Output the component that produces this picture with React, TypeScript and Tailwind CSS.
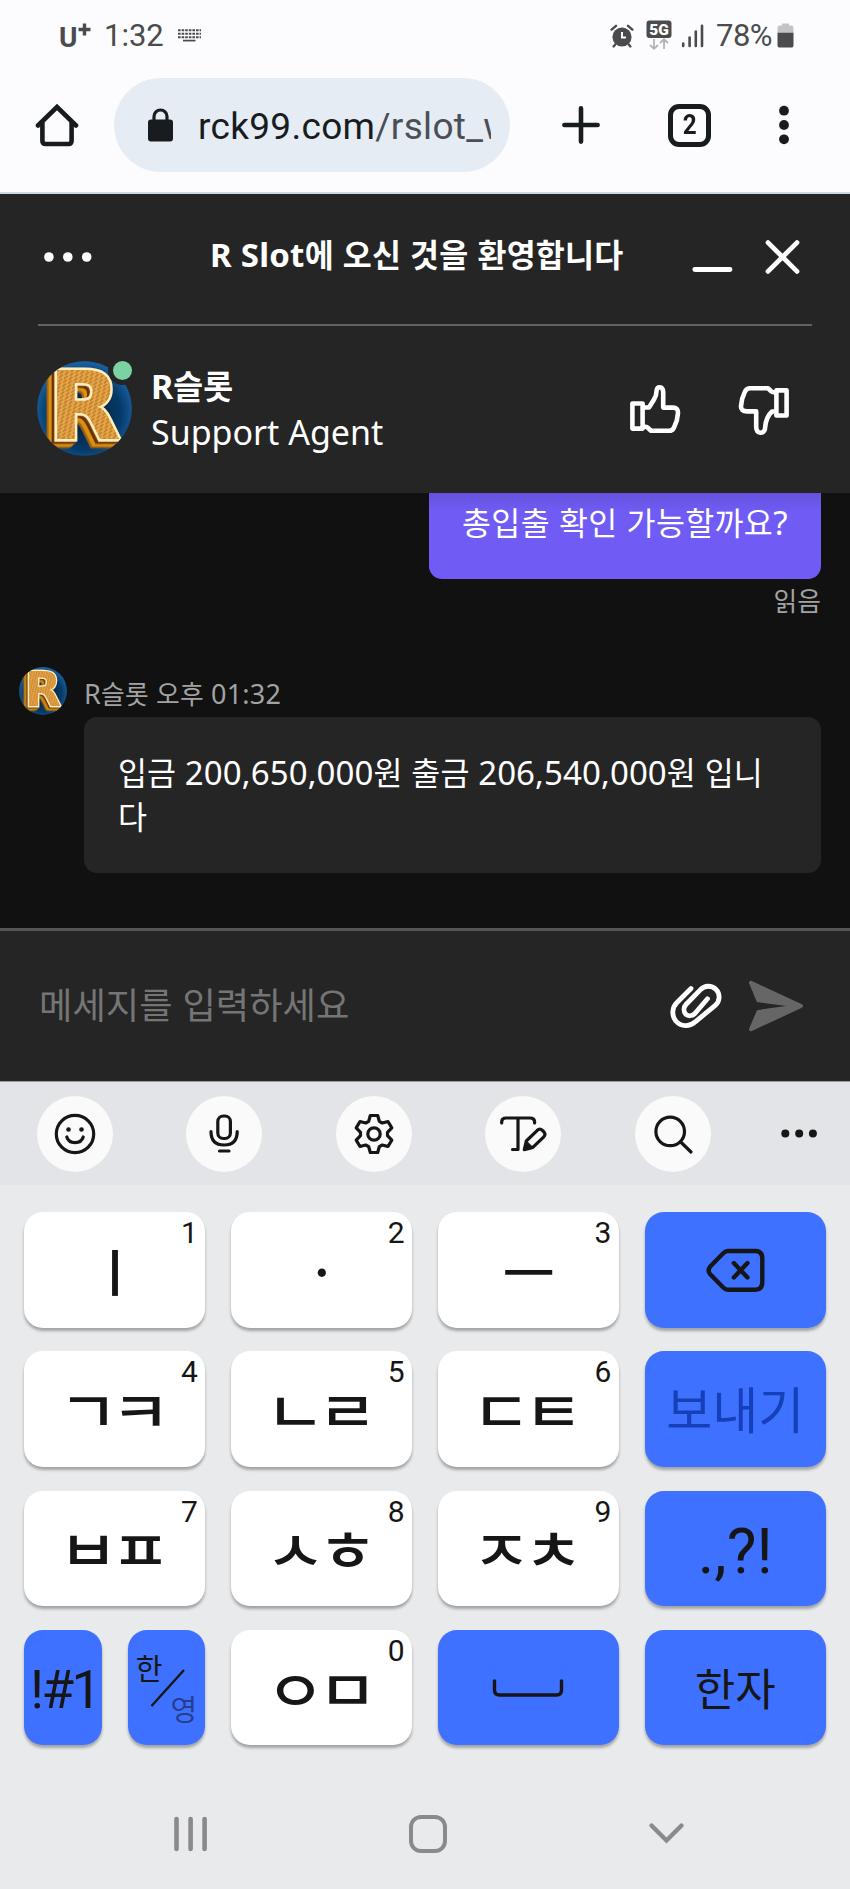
import type { ReactNode } from 'react';

const HANGUL = /([\u3131-\u318e\uac00-\ud7a3]+)/;

// Hangul runs are set a little smaller than the latin text around them
function Mixed({ text }: { text: string }) {
  return (
    <>
      {text.split(HANGUL).map((part, i) =>
        HANGUL.test(part) ? (
          <span key={i} className="font-['Noto_Sans_CJK_KR',sans-serif] text-[0.955em] leading-none">{part}</span>
        ) : (
          <span key={i}>{part}</span>
        )
      )}
    </>
  );
}

function Avatar({ id, size }: { id: string; size: number }) {
  return (
    <svg width={size} height={size} viewBox="0 0 95 95" className="shrink-0">
      <defs>
        <clipPath id={`${id}-clip`}><circle cx="47.5" cy="47.5" r="47.3" /></clipPath>
        <radialGradient id={`${id}-bg`} cx="0.5" cy="0.55" r="0.55">
          <stop offset="0" stopColor="#04182f" />
          <stop offset="0.7" stopColor="#053a68" />
          <stop offset="1" stopColor="#1b63a5" />
        </radialGradient>
        <pattern id={`${id}-grain`} width="5" height="4" patternUnits="userSpaceOnUse" patternTransform="rotate(12)">
          <rect width="5" height="4" fill="#e6a546" />
          <path d="M0 4 L3 0" stroke="#b5752a" strokeWidth="1.3" />
        </pattern>
        {/* bevel: dark rim and a gold edge that runs down to the left */}
        <filter id={`${id}-bevel`} x="-20%" y="-20%" width="140%" height="140%">
          <feDropShadow dx="-1" dy="1" stdDeviation="0" floodColor="#8a4a0c" />
          <feDropShadow dx="-2" dy="1.5" stdDeviation="0" floodColor="#6b2d06" />
          <feDropShadow dx="-3" dy="2.5" stdDeviation="0.4" floodColor="#d99018" />
          <feDropShadow dx="-2" dy="1.5" stdDeviation="0.4" floodColor="#a8620e" />
        </filter>
      </defs>
      <g clipPath={`url(#${id}-clip)`}>
        <rect width="95" height="95" fill={`url(#${id}-bg)`} />
        <text
          x="11.5"
          y="78"
          fontFamily="DejaVu Sans, sans-serif"
          fontWeight="700"
          fontSize="94"
          fill={`url(#${id}-grain)`}
          stroke="#ffeebb"
          strokeWidth="5"
          paintOrder="stroke"
          filter={`url(#${id}-bevel)`}
        >
          R
        </text>
      </g>
    </svg>
  );
}

function StatusBar() {
  return (
    <div className="flex h-[71px] items-center pl-[59px] pr-[56px] text-[#4b4b4d]">
      <span className="w-[19px] font-['Roboto',sans-serif] text-[28px] font-bold leading-[71px] pt-[3px]">U</span>
      <svg width="13" height="13" viewBox="0 0 13 13" className="-mt-[13px]">
        <path d="M6.5 0.5V12.5M0.5 6.5H12.5" stroke="currentColor" strokeWidth="3.4" />
      </svg>
      <span className="ml-[13px] w-[60px] pt-[2px] font-['Roboto',sans-serif] text-[31px]">1:32</span>
      <svg width="23" height="13" viewBox="0 0 23 13" className="ml-[14px]" stroke="currentColor">
        <path d="M0 1.2H23M0 4.7H23M0 8.2H23" strokeWidth="2" strokeDasharray="2.6 1" />
        <path d="M5 11.6H17.5" strokeWidth="1.7" />
      </svg>

      <svg width="24" height="24" viewBox="0 0 24 24" className="ml-auto" fill="none" stroke="currentColor" strokeLinecap="round">
        <circle cx="12" cy="13" r="9.6" fill="currentColor" stroke="none" />
        <path d="M1.6 5.6L6 1.8M22.4 5.6L18 1.8M5.2 20.5L3.6 22.4M18.8 20.5L20.4 22.4" strokeWidth="2.4" />
        <path d="M12 8V13.6H16" stroke="#fcfcfe" strokeWidth="2" strokeLinecap="butt" />
      </svg>
      <svg width="26" height="30" viewBox="0 0 26 30" className="-mt-[2px] ml-[12px]" fill="none">
        <rect x="0.5" y="0.5" width="25" height="17.5" rx="3" fill="currentColor" />
        <text x="13" y="14.6" textAnchor="middle" fontFamily="Roboto, sans-serif" fontWeight="900" fontSize="15.5" fill="#fff">5G</text>
        <path d="M8 19V28.5M4 25L8 28.8L12 25M18 29V19.5M14 23L18 19.2L22 23" stroke="#b4b4b6" strokeWidth="1.8" />
      </svg>
      <svg width="23" height="24" viewBox="0 0 23 24" className="ml-[9px]" stroke="currentColor" strokeWidth="2.6" strokeLinecap="round">
        <path d="M2.2 19.5V22M8.6 13.5V22M14.8 7.5V22M21 1.8V22" />
      </svg>
      <span className="ml-[12px] w-[58px] pt-[2px] font-['Roboto',sans-serif] text-[31px] tracking-[-0.5px]">78%</span>
      <svg width="17" height="25" viewBox="0 0 17 25" className="ml-[3px]">
        <path d="M5 0.5H12V2.5H14.5Q16.5 2.5 16.5 5V10H0.5V5Q0.5 2.5 2.5 2.5H5Z" fill="#c3c3c5" />
        <path d="M0.5 9.7H16.5V22Q16.5 24.6 14 24.6H3Q0.5 24.6 0.5 22Z" fill="currentColor" />
      </svg>
    </div>
  );
}

function BrowserBar() {
  return (
    <div className="mt-[7px] flex h-[94px] items-center pl-[34.5px] text-[#191c1f]">
      <svg width="44" height="44" viewBox="0 0 44 44" fill="none" stroke="currentColor" strokeWidth="4.6" strokeLinecap="round" strokeLinejoin="round">
        <path d="M3 22.5L22 4L41 22.5" strokeLinejoin="miter" />
        <path d="M7.4 20V37.5Q7.4 41 10.5 41H33.5Q36.6 41 36.6 37.5V20" />
      </svg>
      <div className="ml-[35.5px] flex h-[94px] w-[396px] items-center rounded-full bg-[#e5ecf3] pl-[33px]">
        <svg width="27" height="34" viewBox="0 0 27 34">
          <rect x="1" y="11.5" width="25" height="22" rx="3" fill="currentColor" />
          <path d="M7 13V8.5a6.5 6.5 0 0 1 13 0V13" fill="none" stroke="currentColor" strokeWidth="3.2" />
        </svg>
        <span className="ml-[24px] w-[293px] overflow-hidden whitespace-nowrap pt-[3px] font-['Roboto',sans-serif] text-[37px] tracking-[0.3px]">
          rck99.com<span className="text-[#4a4f57]">/rslot_w</span>
        </span>
      </div>
      <svg width="38" height="38" viewBox="0 0 38 38" className="ml-[52px]" stroke="currentColor" strokeWidth="4.6" strokeLinecap="round">
        <path d="M19 2.4V35.6M2.4 19H35.6" />
      </svg>
      <div className="ml-[68px] flex size-[43px] items-center justify-center rounded-[11px] border-[5px] border-[#191c1f] font-['Roboto',sans-serif] text-[27px] font-bold">
        <span className="scale-x-90 pt-px">2</span>
      </div>
      <svg width="10" height="40" viewBox="0 0 10 40" className="ml-[68px]" fill="currentColor">
        <circle cx="5" cy="5.7" r="4.9" />
        <circle cx="5" cy="20" r="4.9" />
        <circle cx="5" cy="34.3" r="4.9" />
      </svg>
    </div>
  );
}

function ChatHeader() {
  return (
    <header className="h-[299px] bg-[#252525] text-white">
      <div className="flex h-[129px] items-center pl-[44px] pr-[50px]">
        <svg width="48" height="10" viewBox="0 0 48 10" className="-mt-[3px]" fill="currentColor">
          <circle cx="4.9" cy="5" r="4.8" />
          <circle cx="23.8" cy="5" r="4.8" />
          <circle cx="42.7" cy="5" r="4.8" />
        </svg>
        <h1 className="-mt-[8px] ml-[118px] whitespace-nowrap text-[33px] font-bold leading-[46px] tracking-[0.25px]">
          <Mixed text="R Slot에 오신 것을 환영합니다" />
        </h1>
        <svg width="41" height="34" viewBox="0 0 41 34" className="-mt-px ml-auto" stroke="currentColor" strokeWidth="4.8" strokeLinecap="round">
          <path d="M2.8 28.5H38" />
        </svg>
        <svg width="35" height="34" viewBox="0 0 35 34" className="-mt-[3px] ml-[32px]" stroke="currentColor" strokeWidth="4.8" strokeLinecap="round">
          <path d="M3 2.6L32 31.4M32 2.6L3 31.4" />
        </svg>
      </div>
      <div className="mx-[38px] mt-[0.5px] h-[2.5px] bg-[#626262]" />
      <div className="flex h-[167px] items-center pl-[37px]">
        <div className="relative -mt-[2px] size-[95px]">
          <Avatar id="agent" size={95} />
          <span className="absolute -right-[5px] -top-[5px] size-[29px] rounded-full border-[5px] border-[#252525] bg-[#7ad3a1]" />
        </div>
        <div className="-mt-[2px] ml-[19px] w-[300px] text-[34px] leading-[46px]">
          <p className="font-bold"><Mixed text="R슬롯" /></p>
          <p>Support Agent</p>
        </div>
        <svg width="52" height="50" viewBox="0 0 52 50" className="-mt-[2px] ml-[178px]" fill="none" stroke="currentColor" strokeWidth="4.6" strokeLinejoin="round">
          <path d="M3.4 19.5H13.6V44.6H3.4Z" />
          <path d="M13.6 23.5H20L25 15.5Q27.5 11.5 27.6 6.5Q28 3.3 30.7 3.3Q34 3.6 34.2 8V23.6H44Q49.3 23.6 49 29Q48.6 36.5 45 43.5Q43.6 46.8 40 46.8H22L18.8 43.8Q18 42.7 16.5 42.7H13.6" />
        </svg>
        <svg width="52" height="50" viewBox="0 0 52 50" className="ml-[57px] rotate-180" fill="none" stroke="currentColor" strokeWidth="4.6" strokeLinejoin="round">
          <path d="M3.4 19.5H13.6V44.6H3.4Z" />
          <path d="M13.6 23.5H18Q24 18 24.8 8Q25 2.3 29.5 2.3Q33.7 2.6 33.8 8V23.6H43Q49.3 23.6 49 29Q48.6 36.5 45 43.5Q43.6 46.8 40 46.8H22L18.8 43.8Q18 42.7 16.5 42.7H13.6" />
        </svg>
      </div>
    </header>
  );
}

function Messages() {
  return (
    <main className="h-[435px] overflow-hidden bg-[#111111]">
      <div className="flex flex-col items-end pr-[29px]">
        <div className="h-[85.5px] w-[392px] rounded-b-[13px] bg-[#705bf4] bg-[linear-gradient(#0000001a,transparent_18px)] pl-[33px] pt-[8px] text-[33px] leading-[44px] tracking-[0.35px] text-white">
          <Mixed text="총입출 확인 가능할까요?" />
        </div>
        <span className="mt-[4px] text-[27px] leading-[36px] text-[#a3a3a3]"><Mixed text="읽음" /></span>
      </div>
      <div className="mt-[48px] flex pl-[18.5px]">
        <Avatar id="sender" size={48} />
        <div className="ml-[17.5px] w-[737px]">
          <p className="pt-[9px] text-[27px] leading-[36px] tracking-[0.2px] text-[#a3a3a3]"><Mixed text="R슬롯 오후 01:32" /></p>
          <div className="mt-[5.5px] h-[155.5px] rounded-[13px] bg-[#252525] pl-[34px] pt-[34px] text-[33px] leading-[44px] tracking-[0.1px] text-white">
            <Mixed text="입금 200,650,000원 출금 206,540,000원 입니" />
            <br />
            <Mixed text="다" />
          </div>
        </div>
      </div>
    </main>
  );
}

function Composer() {
  return (
    <div className="flex h-[153px] items-center border-t-[3px] border-[#565656] bg-[#252525] pl-[39px] pr-[46px]">
      <span className="-mt-[4px] text-[38px] leading-[50px] text-[#757575]"><Mixed text="메세지를 입력하세요" /></span>
      <svg width="52" height="46" viewBox="0 0 52 46" className="ml-auto" fill="none" stroke="#fff" strokeWidth="4.8" strokeLinecap="round">
        <path d="M21 5.5L7 19.5a13.8 13.8 0 0 0 -1.2 18.5a13.5 13.5 0 0 0 19.5 0.8L45.3 22.3a10.8 10.8 0 0 0 0.5 -16a10.6 10.6 0 0 0 -15.3 0.4L16 21.5a7.4 7.4 0 0 0 -0.4 9.6a6.6 6.6 0 0 0 9 -0.3L37.5 15.8" />
      </svg>
      <svg width="56" height="52" viewBox="0 0 56 52" className="ml-[26px]">
        <path d="M3 2.8L53 26L3 49.2L10.4 32L37 26L10.4 20.6Z" fill="#666" stroke="#666" strokeWidth="4" strokeLinejoin="round" />
        <path d="M10 22.2L38 26L10 29.8Z" fill="#252525" />
      </svg>
    </div>
  );
}

function ToolButton({ children }: { children: ReactNode }) {
  return (
    <button className="flex size-[76px] items-center justify-center rounded-full bg-[#fafafa]">
      <svg width="48" height="48" viewBox="0 0 48 48" fill="none" stroke="currentColor" strokeWidth="3.2" strokeLinecap="round" strokeLinejoin="round">
        {children}
      </svg>
    </button>
  );
}

function Toolbar() {
  return (
    <div className="flex h-[104px] items-center gap-[73.5px] border-t border-[#9b9b9d] bg-[#e3e4e8] pl-[36.5px] text-[#161616]">
      <ToolButton>
        <circle cx="24" cy="24" r="18.7" />
        <path d="M15.8 27Q17.5 32.6 24 32.6Q30.5 32.6 32.2 27" />
        <circle cx="17.5" cy="19.5" r="2.3" fill="currentColor" stroke="none" />
        <circle cx="30.5" cy="19.5" r="2.3" fill="currentColor" stroke="none" />
      </ToolButton>
      <ToolButton>
        <rect x="17.8" y="6" width="12.6" height="22.5" rx="5.6" />
        <path d="M11 21.5Q11 35 24.1 35Q37.2 35 37.2 21.5M19.5 41H29" />
      </ToolButton>
      <ToolButton>
        <path d="M20.3 5.5H27.7L29.3 11.3L32.3 13L38 11.5L41.8 17.8L37.5 22.3V25.7L41.8 30.2L38 36.5L32.3 35L29.3 36.7L27.7 42.5H20.3L18.7 36.7L15.7 35L10 36.5L6.2 30.2L10.5 25.7V22.3L6.2 17.8L10 11.5L15.7 13L18.7 11.3Z" />
        <circle cx="24" cy="24" r="6.2" />
      </ToolButton>
      <ToolButton>
        <path d="M2.7 13V11.5Q3 8 7 8H31Q35.3 8 35.6 11.5V13M19 8.5V39.5H13.5" />
        <path d="M25.3 39.6L27.3 31L38.3 20.3Q40.8 18 43.3 20.3L45 22Q47 24.4 44.8 26.8L33.8 37.4Z" />
        <path d="M27.5 31L33.5 37L25.3 39.6Z" fill="currentColor" strokeWidth="1" />
      </ToolButton>
      <ToolButton>
        <circle cx="21.2" cy="21.4" r="14.3" />
        <path d="M31.7 32L42 42" />
      </ToolButton>
      <svg width="36" height="9" viewBox="0 0 36 9" className="-ml-[3px]" fill="currentColor">
        <circle cx="4.3" cy="4.5" r="4" />
        <circle cx="18.2" cy="4.5" r="4" />
        <circle cx="31.9" cy="4.5" r="4" />
      </svg>
    </div>
  );
}

function Key({ hint, blue, children }: { hint?: string; blue?: boolean; children: ReactNode }) {
  return (
    <button
      className={`relative flex h-[115.6px] items-center justify-center rounded-[19px] text-[#161616] shadow-[0_3px_3px_rgba(0,0,0,0.3)] ${
        blue ? 'bg-[#3e71ff]' : 'bg-white'
      }`}
    >
      {children}
      {hint && <span className="absolute right-[7.5px] top-[6px] font-['Roboto',sans-serif] text-[30px] leading-[30px]">{hint}</span>}
    </button>
  );
}

function Jamo({ className = '-mt-[2px] pr-[7px] tracking-[-6px] scale-x-[1.15]', children }: { className?: string; children: string }) {
  return (
    <span className={`whitespace-nowrap font-['Noto_Sans_CJK_KR',sans-serif] text-[56px] font-medium leading-none ${className}`}>
      {children}
    </span>
  );
}

function Keyboard() {
  return (
    <div className="grid grid-cols-4 gap-x-[25.8px] gap-y-[23.7px] px-[24.3px] pt-[27px]">
      <Key hint="1"><Jamo className="scale-y-[0.91]">ㅣ</Jamo></Key>
      <Key hint="2"><Jamo className="-mt-[2px]">ㆍ</Jamo></Key>
      <Key hint="3"><Jamo className="scale-x-[1.02]">ㅡ</Jamo></Key>
      <Key blue>
        <svg width="60" height="46" viewBox="0 0 60 46" className="ml-[2px] mt-[3px]" fill="none" stroke="currentColor" strokeWidth="4.4" strokeLinecap="round" strokeLinejoin="round">
          <path d="M22 3H49Q56.3 3 56.3 10.5V34Q56.3 41.7 49 41.7H22Q19.5 41.7 17.5 39.7L4 26Q1.2 22.4 4 18.8L17.5 5Q19.5 3 22 3Z" />
          <path d="M27.8 15L41.5 29.5M41.5 15L27.8 29.5" strokeWidth="4.4" />
        </svg>
      </Key>

      <Key hint="4"><Jamo>ㄱㅋ</Jamo></Key>
      <Key hint="5"><Jamo>ㄴㄹ</Jamo></Key>
      <Key hint="6"><Jamo>ㄷㅌ</Jamo></Key>
      <Key blue>
        <span className="-mt-[4px] whitespace-nowrap font-['Noto_Sans_CJK_KR',sans-serif] text-[50px] leading-none text-[#1640b8]">보내기</span>
      </Key>

      <Key hint="7"><Jamo>ㅂㅍ</Jamo></Key>
      <Key hint="8"><Jamo>ㅅㅎ</Jamo></Key>
      <Key hint="9"><Jamo>ㅈㅊ</Jamo></Key>
      <Key blue>
        <span className="mt-[7px] font-['Roboto',sans-serif] text-[63px] leading-none">.,?!</span>
      </Key>

      <div className="grid grid-cols-2 gap-x-[25.8px]">
        <Key blue>
          <span className="ml-[3px] mt-[5px] font-['Roboto',sans-serif] text-[53px] leading-none tracking-[-2.5px]">!#1</span>
        </Key>
        <Key blue>
          <div className="flex size-full flex-col justify-center font-['Noto_Sans_CJK_KR',sans-serif] text-[29px] leading-none">
            <span className="pl-[8px] text-left">한</span>
            <svg width="36" height="38" viewBox="0 0 36 38" className="-my-[13px] ml-[22px]" stroke="currentColor" strokeWidth="2.4">
              <path d="M1.5 37L34 1" />
            </svg>
            <span className="pr-[8px] text-right text-[#263f8c]">영</span>
          </div>
        </Key>
      </div>
      <Key hint="0"><Jamo>ㅇㅁ</Jamo></Key>
      <Key blue>
        <svg width="72" height="20" viewBox="0 0 72 20" fill="none" stroke="currentColor" strokeWidth="3.4" strokeLinecap="round">
          <path d="M2.5 3V12Q2.5 17 7.5 17H64.5Q69.5 17 69.5 12V3" />
        </svg>
      </Key>
      <Key blue>
        <span className="-mt-[2px] whitespace-nowrap font-['Noto_Sans_CJK_KR',sans-serif] text-[44px] leading-none">한자</span>
      </Key>
    </div>
  );
}

function NavBar() {
  return (
    <div className="mt-[69.5px] flex items-center pl-[173px]">
      <svg width="35" height="38" viewBox="0 0 35 38" stroke="#8a8a8c" strokeWidth="4.6" strokeLinecap="round">
        <path d="M3.5 4V34M17.6 4V34M31.6 4V34" />
      </svg>
      <div className="ml-[201px] size-[38px] rounded-[12px] border-[4.6px] border-[#8a8a8c]" />
      <svg width="37" height="24" viewBox="0 0 37 24" className="ml-[201px]" fill="none" stroke="#8a8a8c" strokeWidth="4.4" strokeLinecap="round">
        <path d="M3.5 3.5L18.5 18.5L33.5 3.5" />
      </svg>
    </div>
  );
}

export default function App() {
  return (
    <div className="h-[1889px] w-[850px] overflow-hidden bg-[#e9eaec] font-['Noto_Sans','Noto_Sans_CJK_KR',sans-serif]">
      <div className="h-[194px] border-b-2 border-[#ced8df] bg-[#fcfcfe]">
        <StatusBar />
        <BrowserBar />
      </div>
      <ChatHeader />
      <Messages />
      <Composer />
      <Toolbar />
      <Keyboard />
      <NavBar />
    </div>
  );
}
